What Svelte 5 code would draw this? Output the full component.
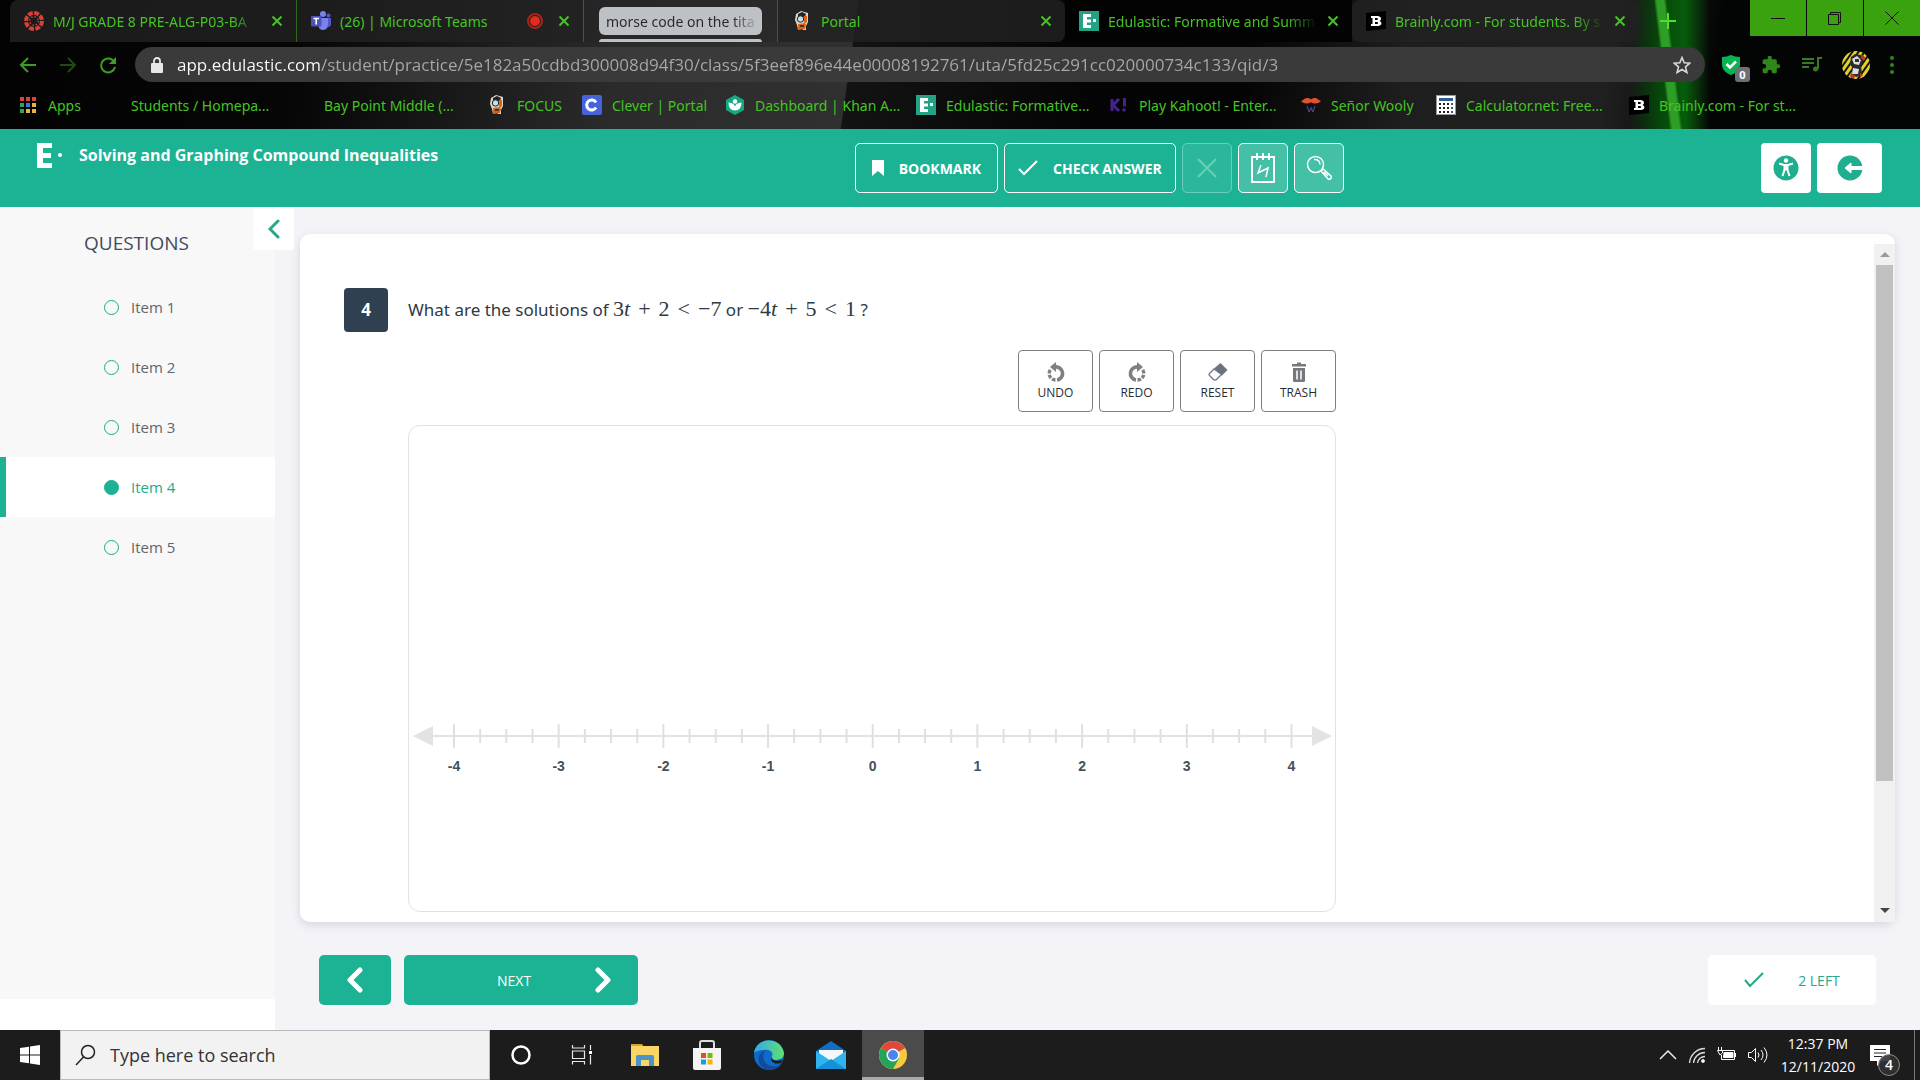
<script>
  let current = 4;
  let query = "";
  let address =
    "app.edulastic.com/student/practice/5e182a50cdbd300008d94f30/class/5f3eef896e44e00008192761/uta/5fd25c291cc020000734c133/qid/3";

  const items = [1, 2, 3, 4, 5];

  const tabs = [
    { icon: "canvas", title: "M/J GRADE 8 PRE-ALG-P03-BA", fade: true },
    { icon: "teams", title: "(26) | Microsoft Teams", recording: true },
    { group: "morse code on the tita" },
    { icon: "focus", title: "Portal", last: true },
    { icon: "edulastic", title: "Edulastic: Formative and Summ", fade: true, active: true },
    { icon: "brainly", title: "Brainly.com - For students. By s", fade: true },
  ];

  const bookmarks = [
    { icon: "apps", title: "Apps" },
    { icon: "blank", title: "Students / Homepa..." },
    { icon: "blank", title: "Bay Point Middle (..." },
    { icon: "focus", title: "FOCUS" },
    { icon: "clever", title: "Clever | Portal" },
    { icon: "khan", title: "Dashboard | Khan A..." },
    { icon: "edulastic", title: "Edulastic: Formative..." },
    { icon: "kahoot", title: "Play Kahoot! - Enter..." },
    { icon: "wooly", title: "Señor Wooly" },
    { icon: "calc", title: "Calculator.net: Free..." },
    { icon: "brainly", title: "Brainly.com - For st..." },
  ];

  const tools = ["Undo", "Redo", "Reset", "Trash"];
  const apps = ["Cortana", "Task View", "File Explorer", "Store", "Edge", "Mail", "Chrome"];

  // quarter ticks from -4 to 4
  const ticks = Array.from({ length: 33 }, (_, i) => ({
    x: 45 + i * 26.17,
    major: i % 4 == 0,
    label: i / 4 - 4,
  }));
</script>

{#snippet favicon(name)}
  <svg class="favicon" width="20" height="20" viewBox="0 0 20 20" aria-hidden="true">
    {#if name == "canvas"}
      <circle cx="10" cy="10" r="8" fill="none" stroke="#d8413a" stroke-width="4" stroke-dasharray="4.8 1.48" />
      <circle cx="10" cy="10" r="4.3" fill="none" stroke="#d8413a" stroke-width="1.6" stroke-dasharray="1.4 1.98" />
    {:else if name == "teams"}
      <circle cx="12" cy="3" r="3" fill="#7b83eb" />
      <circle cx="17.5" cy="4.5" r="2" fill="#5059c9" />
      <path d="M8 7h9v7a5 5 0 0 1-9 3z" fill="#7b83eb" />
      <path d="M17 7h3v6a3 3 0 0 1-3 3z" fill="#5059c9" />
      <rect x="0" y="5" width="10.5" height="10.5" rx="1" fill="#4b53bc" />
      <path d="M2.5 7.5h5.5M5.2 7.5v6" stroke="#fff" stroke-width="1.6" />
    {:else if name == "focus"}
      <path d="M4 3l5-3 7 2v9l-2 4v4h-3l-1-2-4 2-1-5-2-5z" fill="#d9d5cb" />
      <path d="M6 3l4-2 4 2-1 3H6z" fill="#222" />
      <circle cx="8.5" cy="8" r="3.2" fill="#bfe1e8" stroke="#222" />
      <path d="M12 5h3v6l-3 2zM6 13l7-1 1 2-1 4-7 1z" fill="#d9641e" />
      <path d="M8 15h4" stroke="#222" stroke-width="1.5" />
    {:else if name == "edulastic"}
      <rect width="20" height="20" fill="#23a384" />
      <path d="M4 3h8v3H8v2.5h4v3H8V14h4v3H4z" fill="#fff" />
      <rect x="14" y="8" width="3" height="3" fill="#fff" />
    {:else if name == "brainly"}
      <path d="M0 2l20-2v18L0 20z" fill="#000" />
      <path fill-rule="evenodd" d="M5 5h6.500c4 0 4.500 4 2 5 3 1 2.500 5-1.500 5H5v-2h1.500V7H5zM9 7v2h2c1.200 0 1.200-2 0-2zM9 11v2h2c1.500 0 1.500-2 0-2z" fill="#fff" />
    {:else if name == "apps"}
      {#each ["#d94436", "#d94436", "#d94436", "#2fa45b", "#3b78d8", "#e8b33c", "#2fa45b", "#e8b33c", "#e8b33c"] as fill, i}
        <rect x={2 + (i % 3) * 6} y={2 + Math.floor(i / 3) * 6} width="4" height="4" {fill} />
      {/each}
    {:else if name == "clever"}
      <rect width="20" height="20" rx="2" fill="#4763dc" />
      <path d="M14 7.500A5 5 0 1 0 14 12.500" fill="none" stroke="#fff" stroke-width="3" />
    {:else if name == "khan"}
      <path d="M10 0l9 5v10l-9 5-9-5V5z" fill="#17a883" />
      <circle cx="10" cy="6.500" r="2.200" fill="#fff" />
      <path d="M3.500 7.500c4 .3 6 2 6.500 4 .5-2 2.500-3.700 6.500-4 0 5-2.500 8-6.500 8s-6.500-3-6.500-8z" fill="#fff" />
    {:else if name == "kahoot"}
      <path d="M3 4v12M10 4L4 10l6 6" fill="none" stroke="#46228c" stroke-width="3" />
      <path d="M15.500 3v8.500M15 13.500v3" stroke="#46228c" stroke-width="3" />
    {:else if name == "wooly"}
      <path d="M0 6c2 0 3-3 6-3 2 0 3 .5 4 1.500C11 3.500 12 3 14 3c3 0 4 3 6 3-2 3-7 3-10 1.200C7 9 2 9 0 6z" fill="#e5502f" />
      <path d="M6 11l2.200 6L10 12.500 11.800 17 14 11" fill="none" stroke="#554f9e" />
    {:else if name == "calc"}
      <rect x=".5" y=".5" width="19" height="19" fill="#fff" stroke="#999" />
      <rect x="3" y="3" width="14" height="3" fill="#2f5c93" />
      {#each Array(12) as _, i}
        <rect x={3 + (i % 4) * 4} y={8 + Math.floor(i / 4) * 4} width="2" height="2" fill={i % 4 == 3 ? "#2f5c93" : "#222"} />
      {/each}
    {/if}
  </svg>
{/snippet}

<div class="screen">
  <div class="browser">
    <div class="tabstrip">
      {#each tabs as tab}
        {#if tab.group}
          <div class="group"><button>{tab.group}</button></div>
        {:else}
          <div class="tab" class:active={tab.active} class:last={tab.last}>
            {@render favicon(tab.icon)}
            <span class="title" class:fade={tab.fade}>{tab.title}</span>
            {#if tab.recording}<i class="rec"></i>{/if}
            <button class="close" aria-label="Close tab">
              <svg width="12" height="12" viewBox="0 0 12 12"><path d="M1.500 1.500l9 9M10.500 1.500l-9 9" stroke="#45c424" stroke-width="2" /></svg>
            </button>
          </div>
        {/if}
      {/each}
      <button class="newtab" aria-label="New tab">
        <svg width="16" height="16" viewBox="0 0 16 16"><path d="M8 0v16M0 8h16" stroke="#50e02c" stroke-width="2" /></svg>
      </button>
      <div class="window">
        <button aria-label="Minimize"><svg width="14" height="14" viewBox="0 0 14 14"><path d="M0 7.500h14" stroke="#111" /></svg></button>
        <button aria-label="Restore"><svg width="14" height="14" viewBox="0 0 14 14" fill="none" stroke="#111"><path d="M.5 3.500h10v10H.5zM2.500 3.500v-2h10v10h-2" /></svg></button>
        <button aria-label="Close"><svg width="14" height="14" viewBox="0 0 14 14"><path d="M.5.5l13 13M13.500.5l-13 13" stroke="#111" /></svg></button>
      </div>
    </div>

    <div class="toolbar">
      <button aria-label="Back"><svg width="18" height="18" viewBox="0 0 18 18" fill="none" stroke="#3f9c24" stroke-width="2"><path d="M17 9H2M9 2L2 9l7 7" /></svg></button>
      <button aria-label="Forward"><svg width="18" height="18" viewBox="0 0 18 18" fill="none" stroke="#1e4a15" stroke-width="2"><path d="M1 9h15M9 2l7 7-7 7" /></svg></button>
      <button aria-label="Reload"><svg width="18" height="18" viewBox="0 0 18 18"><path d="M15 5.500A7 7 0 1 0 16 11" fill="none" stroke="#3f9c24" stroke-width="2" /><path d="M17 1v7h-7z" fill="#3f9c24" /></svg></button>
      <div class="omnibox">
        <svg width="12" height="16" viewBox="0 0 12 16"><rect y="6" width="12" height="10" rx="1" fill="#e8e8e8" /><path d="M3 7V4a3 3 0 0 1 6 0v3" fill="none" stroke="#e8e8e8" stroke-width="1.800" /></svg>
        <input aria-label="Address" bind:value={address} spellcheck="false" />
        <svg width="18" height="18" viewBox="0 0 18 18"><path d="M9 1.500l2.200 5.300 5.700.4-4.400 3.700 1.400 5.600L9 13.500l-4.900 3 1.400-5.600L1.100 7.200l5.700-.4z" fill="none" stroke="#d8d8d8" stroke-width="1.600" /></svg>
      </div>
      <div class="extensions">
        <button class="shield" aria-label="Adblock">
          <svg width="20" height="20" viewBox="0 0 20 20"><path d="M1 2c4 0 6-1 9-2 3 1 5 2 9 2v7c0 6-4 9-9 11C5 18 1 15 1 9z" fill="#08b452" /><path d="M5.500 9l3.500 3.500 6-6" fill="none" stroke="#fff" stroke-width="2.600" /></svg>
          <span>0</span>
        </button>
        <button aria-label="Extensions"><svg width="20" height="20" viewBox="0 0 24 24"><path d="M20.500 11H19V7a2 2 0 0 0-2-2h-4V3.500a2.500 2.500 0 0 0-5 0V5H4a2 2 0 0 0-2 2v3.800h1.500a2.700 2.700 0 0 1 0 5.400H2V20c0 1.100.9 2 2 2h3.800v-1.500a2.700 2.700 0 0 1 5.400 0V22H17a2 2 0 0 0 2-2v-4h1.500a2.500 2.500 0 0 0 0-5z" fill="#2f8619" /></svg></button>
        <button aria-label="Media"><svg width="20" height="20" viewBox="0 0 20 20" fill="none" stroke="#3a7a22" stroke-width="2"><path d="M0 4h12M0 8h12M0 12h7M16 14V3h4" /><circle cx="13.500" cy="14" r="2.500" fill="#3a7a22" stroke="none" /></svg></button>
        <button aria-label="Profile">
          <svg width="28" height="28" viewBox="0 0 28 28">
            <defs>
              <pattern id="stripes" width="5" height="5" patternUnits="userSpaceOnUse" patternTransform="rotate(35)"><rect width="5" height="5" fill="#16150c" /><rect width="3" height="5" fill="#e2d22a" /></pattern>
            </defs>
            <circle cx="14" cy="14" r="14" fill="url(#stripes)" />
            <path d="M9 6l4-3 6 1 3 5-3 6 1 7-5 4-6-2 2-6-3-5z" fill="#2a2a2a" />
            <path d="M10 8l5-3 4 4-2 5-5-1zM11 17l6 1-1 5-6 0z" fill="#dcdcdc" />
            <path d="M13 8h4v3h-4z" fill="#333" />
            <path d="M19 3l4 3-1 4-3-3zM9 23l4 1-1 4-4-2zM18 22l3 2-3 3z" fill="#c9302b" />
          </svg>
        </button>
        <button aria-label="Menu"><svg width="4" height="18" viewBox="0 0 4 18" fill="#2f8619"><circle cx="2" cy="2" r="2" /><circle cx="2" cy="9" r="2" /><circle cx="2" cy="16" r="2" /></svg></button>
      </div>
    </div>

    <nav class="bookmarks" aria-label="Bookmarks">
      {#each bookmarks as mark}
        <a href="#top">{@render favicon(mark.icon)}<span>{mark.title}</span></a>
      {/each}
    </nav>
  </div>

  <header>
    <div class="brand">
      <svg width="26" height="26" viewBox="0 0 26 26" fill="#fff" aria-hidden="true"><path d="M1 0h15v5H7v5h8v5H7v5h9v5H1z" /><circle cx="24" cy="12" r="2" /></svg>
      <h1>Solving and Graphing Compound Inequalities</h1>
    </div>
    <div class="actions">
      <button class="bookmark"><svg width="12" height="16" viewBox="0 0 12 16"><path d="M0 0h12v16l-6-5-6 5z" fill="#fff" /></svg>BOOKMARK</button>
      <button class="check"><svg width="20" height="16" viewBox="0 0 20 16"><path d="M1 9l5 5L19 1" fill="none" stroke="#fff" stroke-width="2" /></svg>CHECK ANSWER</button>
      <button class="square" disabled aria-label="Cross out"><svg width="20" height="20" viewBox="0 0 20 20"><path d="M1 1l18 18M19 1L1 19" stroke="#fff" stroke-width="2" /></svg></button>
      <button class="square" aria-label="Scratchpad"><svg width="24" height="30" viewBox="0 0 24 30" fill="none" stroke="#fff" stroke-width="2"><path d="M1 4h22v25H1zM6 0v7M12 0v7M18 0v7" /><path d="M10 12l-3 8 10-5-2 9" stroke-width="1.500" /></svg></button>
      <button class="square" aria-label="Magnifier"><svg width="26" height="26" viewBox="0 0 26 26" fill="none" stroke="#fff" stroke-width="1.500"><circle cx="9.500" cy="9.500" r="8" /><path d="M8 4.500c4-.5 6 2 6 5M15 16l2-2 8 7c1 2-1 4-3 3zM18 17l4 4" /></svg></button>
    </div>
    <div class="account">
      <button class="access" aria-label="Accessibility"><svg width="26" height="26" viewBox="0 0 26 26"><circle cx="13" cy="13" r="12.500" fill="#1fae8e" /><circle cx="13" cy="5.500" r="2.200" fill="#fff" /><path d="M6 8.500l5 1.500h4l5-1.500" fill="none" stroke="#fff" stroke-width="2" /><path d="M10.500 10h5v5.500h-5z" fill="#fff" /><path d="M11.500 15L9.500 21M14.500 15l2 6" stroke="#fff" stroke-width="2" /></svg></button>
      <button class="exit" aria-label="Exit"><svg width="26" height="26" viewBox="0 0 26 26"><circle cx="13" cy="13" r="12.500" fill="#1fae8e" /><path d="M8 13l6-5v3.500h12v3H14V18z" fill="#fff" stroke="#fff" /></svg></button>
    </div>
  </header>

  <div class="content">
    <aside>
      <h2>QUESTIONS</h2>
      <ul>
        {#each items as n}
          <li>
            <button class:current={n == current} on:click={() => (current = n)}><i></i>Item {n}</button>
          </li>
        {/each}
      </ul>
    </aside>
    <button class="collapse" aria-label="Collapse"><svg width="12" height="20" viewBox="0 0 12 20"><path d="M10 2l-8 8 8 8" fill="none" stroke="#28a78a" stroke-width="3" stroke-linecap="round" /></svg></button>

    <main>
      <section class="card">
        <div class="question">
          <div class="number">4</div>
          <div class="body">
            <p>
              What are the solutions of <span class="math">3<i>t</i><b>+</b>2<b>&lt;</b><b class="neg">−</b>7</span> or
              <span class="math"><b class="neg">−</b>4<i>t</i><b>+</b>5<b>&lt;</b>1</span> ?
            </p>
            <div class="tools">
              {#each tools as tool}
                <button>
                  <svg width="20" height="20" viewBox="0 0 20 20" aria-hidden="true">
                    {#if tool == "Undo" || tool == "Redo"}
                      <g transform={tool == "Redo" ? "translate(20 0) scale(-1 1)" : null}>
                        <path d="M9 5a6.500 6.500 0 0 1 2 13" fill="none" stroke="#7d8084" stroke-width="3.600" />
                        <path d="M9.500 18A6.500 6.500 0 0 1 5 7" fill="none" stroke="#7d8084" stroke-width="3.400" stroke-dasharray="3.600 1.400" />
                        <path d="M4 5l6-5v10z" fill="#7d8084" />
                      </g>
                    {:else if tool == "Reset"}
                      <path d="M12.500 1l7 7-5.500 5.500-8-7z" fill="#6a7480" />
                      <path d="M6 7l-4.500 4.500c-.7.700-.7 1.300 0 2l4 4c.7.700 2.300.7 3 0l5-5z" fill="#fff" stroke="#6a7480" stroke-width="1.200" />
                    {:else}
                      <path d="M3 2h5V.5h4V2h5v2.500H3z" fill="#75787c" />
                      <path d="M4 6h12v12.500a1.500 1.500 0 0 1-1.500 1.500h-9A1.500 1.500 0 0 1 4 18.500z" fill="#75787c" />
                      <path d="M8 8.500v9M12 8.500v9" stroke="#fff" stroke-width="1.500" />
                    {/if}
                  </svg>
                  {tool.toUpperCase()}
                </button>
              {/each}
            </div>
            <div class="graph">
              <svg viewBox="0 0 926 485" role="img" aria-label="Number line from -4 to 4">
                <path d="M4 310l20-10v20zM923 310l-20-10v20z" fill="#e3e3e3" />
                <path d="M20 310h886" stroke="#e3e3e3" stroke-width="2" />
                {#each ticks as t}
                  <line x1={t.x} x2={t.x} y1={t.major ? 298 : 303} y2={t.major ? 322 : 317} stroke="#e0e0e0" stroke-width="2" />
                  {#if t.major}<text x={t.x} y="345">{t.label}</text>{/if}
                {/each}
              </svg>
            </div>
          </div>
        </div>
        <div class="scrollbar" aria-hidden="true">
          <svg width="10" height="5" viewBox="0 0 10 5"><path d="M0 5l5-5 5 5z" fill="#9a9a9a" /></svg>
          <i></i>
          <svg width="10" height="5" viewBox="0 0 10 5"><path d="M0 0l5 5 5-5z" fill="#444" /></svg>
        </div>
      </section>

      <footer>
        <button class="prev" aria-label="Previous"><svg width="18" height="26" viewBox="0 0 18 26"><path d="M14 3L4 13l10 10" fill="none" stroke="#fff" stroke-width="5" stroke-linecap="round" stroke-linejoin="round" /></svg></button>
        <button class="next">NEXT<svg width="18" height="26" viewBox="0 0 18 26"><path d="M4 3l10 10L4 23" fill="none" stroke="#fff" stroke-width="5" stroke-linecap="round" stroke-linejoin="round" /></svg></button>
        <div class="left"><svg width="20" height="16" viewBox="0 0 20 16"><path d="M1 8l5 6L19 1" fill="none" stroke="#28a78a" stroke-width="2" /></svg>2 LEFT</div>
      </footer>
    </main>
  </div>

  <div class="taskbar">
    <button class="start" aria-label="Start"><svg width="20" height="20" viewBox="0 0 20 20" fill="#fff"><path d="M0 3l9-1.300V9.500H0zM10 1.500L20 0v9.500H10zM0 10.500h9v7.800L0 17zM10 10.500h10V20l-10-1.500z" /></svg></button>
    <label class="search">
      <svg width="22" height="22" viewBox="0 0 22 22" fill="none" stroke="#222" stroke-width="1.500"><circle cx="13" cy="8" r="6.500" /><path d="M8.500 13L1 21" /></svg>
      <input aria-label="Search" placeholder="Type here to search" bind:value={query} />
    </label>
    {#each apps as app}
      <button class="app" class:open={app == "Chrome"} aria-label={app}>
        <svg width="30" height="30" viewBox="0 0 30 30">
          {#if app == "Cortana"}
            <circle cx="15" cy="15" r="8.500" fill="none" stroke="#fff" stroke-width="2.500" />
          {:else if app == "Task View"}
            <path d="M4.500 5v3h12V5M4.500 24.500v-3h12v3M4.500 11h12v7.500h-12zM22.500 5v5M22.500 15v9.500" fill="none" stroke="#e8e8e8" stroke-width="1.200" />
            <path d="M22.500 11v3" stroke="#fff" stroke-width="3" />
          {:else if app == "File Explorer"}
            <path d="M1 4h11l2 3H1z" fill="#dba21d" />
            <rect x="1" y="6" width="28" height="20" fill="#f9d568" />
            <path d="M6 26V17q0-2 2-2h14q2 0 2 2v9h-5v-6h-8v6z" fill="#4b94c9" />
          {:else if app == "Store"}
            <path d="M8 9V3q0-2 2-2h10q2 0 2 2v6" fill="none" stroke="#ddd" stroke-width="2" />
            <path d="M1 8h28v20q0 2-2 2H3q-2 0-2-2z" fill="#f4f4f4" />
            <path d="M9 13h5v5H9z" fill="#e34f21" /><path d="M15.500 13h5v5h-5z" fill="#7cb800" /><path d="M9 19.500h5v5H9z" fill="#10a3e2" /><path d="M15.500 19.500h5v5h-5z" fill="#f6b505" />
          {:else if app == "Edge"}
            <defs><linearGradient id="edge"><stop stop-color="#35a9e8" /><stop offset="1" stop-color="#60df70" /></linearGradient></defs>
            <circle cx="15" cy="15" r="15" fill="#0b6ccb" />
            <path d="M0 13C2-3 27-4 30 13c0 5-4 7-9 7-3 0-5-2-3-4 2-4-3-7-8-6-6 0-9 2-10 3z" fill="url(#edge)" />
            <path d="M12 10c-5 5-3 14 5 16 5 1 9 0 11-3-4 8-15 9-21 3-5-7-2-14 5-16z" fill="#15499b" />
            <path d="M18 16c-1 4 4 6 11 4l-2 3c-6 2-12-1-9-7z" fill="#1c1c1c" />
          {:else if app == "Mail"}
            <path d="M0 11L15 1l15 10v18H0z" fill="#126fc0" />
            <path d="M3 10h24v10H3z" fill="#f4f8fc" />
            <path d="M0 11l15 10 15-10v18H0z" fill="#30b4ee" />
            <path d="M0 29l15-10 15 10z" fill="#1690d8" />
          {:else}
            <circle cx="15" cy="15" r="14" fill="#f7cb3f" />
            <path d="M15 15L2.900 8A14 14 0 0 1 27.100 8z" fill="#dc4a3d" />
            <path d="M15 15L2.900 8A14 14 0 0 0 15 29l6-10.500z" fill="#24a35a" />
            <circle cx="15" cy="15" r="6.500" fill="#fff" />
            <circle cx="15" cy="15" r="5" fill="#4586f0" />
          {/if}
        </svg>
      </button>
    {/each}
    <div class="tray">
      <svg width="18" height="18" viewBox="0 0 18 18" fill="none" stroke="#eee" stroke-width="1.500"><path d="M1 13l8-8 8 8" /></svg>
      <svg width="18" height="18" viewBox="0 0 18 18" fill="none" stroke="#ddd"><path d="M1.500 17A15.500 15.500 0 0 1 17 2.500M5.500 17A11.500 11.500 0 0 1 17 6.500M9.500 17A7.500 7.500 0 0 1 17 10.500" stroke-width="1.300" /><circle cx="15" cy="15" r="1.500" fill="#fff" /></svg>
      <svg width="20" height="18" viewBox="0 0 20 18" fill="none" stroke="#fff"><path d="M5.500 4.500h12v9H4.500V9" /><path d="M7 6.500h9v5H6.500z" fill="#fff" /><path d="M18.500 7v4M1.500 1v3M4.500 1v3M.5 4.500h5V7L3 9z" /></svg>
      <svg width="20" height="18" viewBox="0 0 20 18" fill="none" stroke="#fff"><path d="M.5 6.500h3l4-4v13l-4-4h-3zM10 6.500q2 2.500 0 5M13 4q4 5 0 10M16 1.500q6 7.500 0 15" /></svg>
      <div class="clock"><time>12:37 PM</time><time>12/11/2020</time></div>
      <button class="notices" aria-label="Notifications">
        <svg width="20" height="21" viewBox="0 0 20 21"><path d="M0 0h20v16h-8l-5 5v-5H0z" fill="#fff" /><path d="M4 4.500h12M4 8h12M4 11.500h8" stroke="#222" /></svg>
        <span>4</span>
      </button>
    </div>
  </div>
</div>

<style>
  :global(body) {
    margin: 0;
    background: #f3f3f8;
  }
  .screen {
    min-height: 100vh;
    display: flex;
    flex-direction: column;
    font-family: "Open Sans", sans-serif;
    color: #434b5d;
  }
  button,
  input {
    font: inherit;
    color: inherit;
    border: 0;
    background: none;
    padding: 0;
    margin: 0;
    outline: none;
  }
  button {
    cursor: pointer;
    display: flex;
    align-items: center;
    justify-content: center;
  }
  svg {
    flex: none;
    display: block;
  }

  /* Browser window */
  .browser {
    height: 129px;
    color: #45c424;
    font-size: 14px;
    font-family: "Noto Sans", sans-serif;
    background:
      linear-gradient(83deg, transparent 1657px, #2f9e26 1660px, #2f9e26 1667px, transparent 1670px),
      linear-gradient(90deg, transparent 1630px, #06480a 1660px, #075c0b 1685px, transparent 1710px),
      linear-gradient(98deg, #030303 0, #060606 300px, #2b2b2b 620px, #303030 850px, #131313 851px, #050505 1080px, #040404 1240px, #1e1e1e 1400px, #202020 1600px, #030505 1710px, #030505);
  }
  .tabstrip {
    display: flex;
    height: 42px;
    padding-left: 10px;
  }
  .tab {
    flex: 0 1 287px;
    min-width: 0;
    box-sizing: border-box;
    display: flex;
    align-items: center;
    gap: 9px;
    padding: 0 13px 0 14px;
    background: rgba(34, 34, 34, 0.8);
    border-right: 1px solid #2a6a1c;
  }
  .tab:first-child {
    border-radius: 8px 0 0 0;
  }
  .tab.last {
    border-right: 0;
    border-radius: 0 8px 8px 0;
  }
  .tab.active {
    background: #030303;
    border-right: 0;
  }
  .tab.active + .tab {
    border-right: 0;
    border-radius: 8px;
  }
  .title {
    flex: 1;
    white-space: nowrap;
  }
  .title.fade {
    mask-image: linear-gradient(90deg, #000 85%, transparent);
  }
  .rec {
    width: 10px;
    height: 10px;
    margin-right: 8px;
    border-radius: 50%;
    background: #e02b20;
    border: 1px solid #2a1a1a;
    outline: 2px solid #a8231b;
  }
  .group {
    flex: 0 1 194px;
    min-width: 0;
    box-sizing: border-box;
    padding: 7px 15px 0;
    background: rgba(34, 34, 34, 0.4);
    border-right: 1px solid #2a6a1c;
  }
  .group button {
    width: 100%;
    height: 28px;
    padding: 0 7px;
    justify-content: flex-start;
    white-space: nowrap;
    border-radius: 6px;
    color: transparent;
    background:
      linear-gradient(90deg, #26282b 82%, #a9adb2 96%) text,
      #bdc1c6;
  }
  .group::after {
    content: "";
    display: block;
    height: 3px;
    margin-top: 4px;
    border-radius: 3px 3px 0 0;
    background: #bdc1c6;
  }
  .newtab {
    width: 58px;
    height: 42px;
  }
  .window {
    margin-left: auto;
    display: flex;
    gap: 1px;
    height: 36px;
  }
  .window button {
    width: 56px;
    background: #3ba20f;
  }
  .toolbar {
    display: flex;
    align-items: center;
    height: 45px;
    padding-left: 8px;
  }
  .toolbar > button {
    width: 40px;
    height: 40px;
  }
  .omnibox {
    flex: 1;
    display: flex;
    align-items: center;
    gap: 14px;
    height: 35px;
    margin-left: 7px;
    padding: 0 14px 0 16px;
    border-radius: 18px;
    background: #3a3a3a;
  }
  .omnibox input {
    flex: 1;
    font-family: "Open Sans", sans-serif;
    font-size: 17px;
    color: transparent;
    background: linear-gradient(90deg, #fff 144px, #a9a9a9 144px);
    background-clip: text;
  }
  .extensions {
    display: flex;
    align-items: center;
    justify-content: space-between;
    width: 173px;
    padding: 0 26px 0 16px;
  }
  .shield {
    position: relative;
  }
  .shield span {
    position: absolute;
    left: 14px;
    top: 12px;
    width: 15px;
    border-radius: 3px;
    background: #6d6f78;
    color: #fff;
    font-size: 11px;
    line-height: 15px;
    font-weight: 700;
  }
  .bookmarks {
    display: grid;
    grid-template-columns: 83px 193px 193px 95px 143px 191px 193px 192px 135px 193px 1fr;
    align-items: center;
    height: 36px;
    padding-left: 18px;
  }
  .bookmarks a {
    display: flex;
    align-items: center;
    gap: 10px;
    color: inherit;
    text-decoration: none;
    white-space: nowrap;
  }

  /* Player header */
  header {
    display: grid;
    grid-template-columns: 35fr auto 23fr;
    height: 50px;
    padding: 14px 38px 14px 36px;
    background: #1cb394;
    color: #fff;
  }
  .brand {
    display: flex;
    gap: 17px;
  }
  h1 {
    margin: 0;
    font-size: 16px;
    line-height: 24px;
    white-space: nowrap;
  }
  .actions,
  .account {
    display: flex;
    gap: 6px;
  }
  .actions button {
    box-sizing: border-box;
    height: 50px;
    gap: 15px;
    border: 1px solid #fff;
    border-radius: 5px;
    font-size: 14px;
    font-weight: 700;
  }
  .bookmark {
    width: 143px;
  }
  .actions .check {
    width: 172px;
  }
  .actions .square {
    width: 50px;
    background: rgba(255, 255, 255, 0.18);
  }
  .actions .square:disabled {
    opacity: 0.35;
  }
  .account {
    justify-content: flex-end;
  }
  .account button {
    height: 50px;
    border-radius: 4px;
    background: #fff;
  }
  .access {
    width: 50px;
  }
  .exit {
    width: 65px;
  }

  /* Question list */
  .content {
    flex: 1;
    position: relative;
    display: flex;
  }
  aside {
    width: 275px;
    background: linear-gradient(0deg, #fff 31px, #f8f8f8 31px);
  }
  h2 {
    margin: 24px 0 22px 84px;
    font-size: 19px;
    line-height: 24px;
    font-weight: 400;
  }
  ul {
    margin: 0;
    padding: 0;
    list-style: none;
  }
  li button {
    box-sizing: border-box;
    width: 100%;
    height: 60px;
    padding-left: 98px;
    justify-content: flex-start;
    gap: 12px;
    border-left: 6px solid transparent;
    font-size: 15px;
    color: #62656c;
  }
  li i {
    box-sizing: border-box;
    width: 15px;
    height: 15px;
    border: 1px solid #1cab8c;
    border-radius: 50%;
  }
  li .current {
    background: #fff;
    border-left-color: #1cb394;
    color: #1cab8c;
  }
  .current i {
    background: #1cb394;
  }
  .collapse {
    position: absolute;
    left: 253px;
    top: 1px;
    width: 41px;
    height: 42px;
    border-radius: 3px;
    background: #fff;
  }

  /* Question */
  main {
    flex: 1;
    display: flex;
    flex-direction: column;
    padding: 27px 25px 25px;
  }
  .card {
    flex: 1;
    display: flex;
    justify-content: space-between;
    border-radius: 10px;
    background: #fff;
    box-shadow: 0 3px 10px rgba(60, 60, 90, 0.16);
  }
  .question {
    display: flex;
    gap: 20px;
    flex: 0 1 992px;
    padding: 54px 0 10px 44px;
  }
  .number {
    width: 44px;
    height: 44px;
    border-radius: 4px;
    background: #2f4151;
    color: #fff;
    font-size: 17px;
    font-weight: 700;
    line-height: 44px;
    text-align: center;
  }
  .body {
    flex: 1;
    min-width: 0;
  }
  p {
    margin: 0;
    font-family: "Noto Sans", sans-serif;
    font-size: 17px;
    line-height: 44px;
    color: #2d3a47;
  }
  .math {
    font-family: "Liberation Serif", serif;
    font-size: 22px;
    line-height: 24px;
    white-space: nowrap;
  }
  .math b {
    font-weight: 400;
    margin: 0 8px;
  }
  .math .neg {
    margin: 0;
  }
  .tools {
    display: flex;
    justify-content: flex-end;
    gap: 6px;
    margin: 18px 0 13px;
  }
  .tools button {
    box-sizing: border-box;
    width: 75px;
    height: 62px;
    padding-top: 2px;
    flex-direction: column;
    gap: 2px;
    border: 1px solid #7d7f83;
    border-radius: 4px;
    font-size: 12px;
    font-weight: 500;
    line-height: 18px;
    color: #1f2d38;
  }
  .graph {
    border: 1px solid #e2e2e6;
    border-radius: 12px;
  }
  .graph svg {
    width: 100%;
  }
  .graph text {
    font: 700 14px "Liberation Sans", sans-serif;
    fill: #43515c;
    text-anchor: middle;
  }
  .scrollbar {
    display: flex;
    flex-direction: column;
    align-items: center;
    width: 21px;
    margin-top: 10px;
    padding: 8px 0 9px;
    box-sizing: border-box;
    background: #f1f1f1;
  }
  .scrollbar i {
    width: 17px;
    flex: 0 0 78%;
    margin: 8px 0 auto;
    background: #c1c1c1;
  }
  footer {
    display: flex;
    margin-top: 33px;
    padding: 0 19px;
  }
  footer button {
    height: 50px;
    border-radius: 5px;
    background: #1cb394;
    color: #fff;
    font-size: 14px;
  }
  .prev {
    width: 72px;
  }
  .next {
    width: 234px;
    margin-left: 13px;
    padding: 0 26px 0 93px;
    box-sizing: border-box;
    justify-content: space-between;
  }
  .left {
    display: flex;
    align-items: center;
    justify-content: center;
    gap: 34px;
    width: 168px;
    height: 50px;
    margin-left: auto;
    border-radius: 5px;
    background: #fff;
    color: #28a78a;
    font-size: 14px;
  }

  /* Windows taskbar */
  .taskbar {
    display: flex;
    height: 50px;
    background: #1c1c1c;
    color: #fff;
  }
  .start {
    width: 60px;
  }
  .search {
    box-sizing: border-box;
    width: 430px;
    display: flex;
    align-items: center;
    gap: 13px;
    padding-left: 14px;
    border: 1px solid #b9b9b9;
    background: #f2f2f2;
    color: #333;
  }
  .search input {
    flex: 1;
    font-size: 18px;
  }
  .search input::placeholder {
    color: #333;
    opacity: 1;
  }
  .app {
    width: 62px;
    box-sizing: border-box;
  }
  .app.open {
    background: #4b4b4b;
    border-bottom: 3px solid #a9a9a9;
    padding-top: 3px;
  }
  .tray {
    display: flex;
    align-items: center;
    gap: 11px;
    margin-left: auto;
    margin-right: 5px;
    border-right: 1px solid #777;
  }
  .clock {
    display: flex;
    flex-direction: column;
    width: 78px;
    text-align: center;
    font-size: 14px;
    line-height: 23px;
  }
  .notices {
    position: relative;
    width: 46px;
    height: 50px;
    padding-right: 24px;
    box-sizing: border-box;
  }
  .notices svg {
    margin-left: 2px;
  }
  .notices span {
    position: absolute;
    left: 10px;
    top: 24px;
    width: 20px;
    border-radius: 50%;
    border: 1px solid #8a8a8a;
    background: rgba(50, 50, 50, 0.9);
    font-size: 14px;
    line-height: 20px;
    font-weight: 600;
  }
</style>
